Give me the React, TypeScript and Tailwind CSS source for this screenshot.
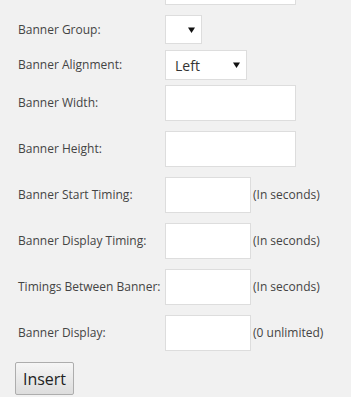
import type { ReactNode } from "react";

const font = { fontFamily: '"Open Sans", "Noto Sans", sans-serif' };

function Arrow() {
  return (
    <svg width="7" height="6" viewBox="0 0 7 6" className="shrink-0">
      <path d="M0 0.5h7L3.5 6z" fill="#111" />
    </svg>
  );
}

function Row({ label, gap, children }: { label: string; gap: string; children: ReactNode }) {
  return (
    <div className={`flex items-center ${gap}`}>
      <span className="w-[165px] shrink-0 whitespace-nowrap pl-[18px] text-[12px] text-[#444]">
        {label}
      </span>
      {children}
    </div>
  );
}

function Box({ wide }: { wide?: boolean }) {
  return (
    <div
      className={`h-[36px] border border-[#dddddd] bg-white ${wide ? "w-[131px]" : "w-[86px]"}`}
    />
  );
}

function Hint({ children }: { children: ReactNode }) {
  return <span className="pl-[2px] text-[12px] text-[#444]">{children}</span>;
}

export default function App() {
  return (
    <div className="h-[397px] w-[351px] overflow-hidden bg-[#f1f1f1]" style={font}>
      <div className="flex flex-col">
        <div className="mt-[-31px] flex">
          <div className="w-[165px] shrink-0" />
          <Box wide />
        </div>
        <Row label="Banner Group:" gap="mt-[10px]">
          <div className="flex h-[29px] w-[37px] items-center justify-end border border-[#dddddd] bg-white pr-[6px]">
            <Arrow />
          </div>
        </Row>
        <Row label="Banner Alignment:" gap="mt-[6px]">
          <div className="flex h-[30px] w-[82px] items-center justify-between border border-[#dddddd] bg-white pl-[9px] pr-[6px]">
            <span className="text-[14px] text-[#333]">Left</span>
            <Arrow />
          </div>
        </Row>
        <Row label="Banner Width:" gap="mt-[5px]">
          <Box wide />
        </Row>
        <Row label="Banner Height:" gap="mt-[10px]">
          <Box wide />
        </Row>
        <Row label="Banner Start Timing:" gap="mt-[10px]">
          <Box />
          <Hint>(In seconds)</Hint>
        </Row>
        <Row label="Banner Display Timing:" gap="mt-[10px]">
          <Box />
          <Hint>(In seconds)</Hint>
        </Row>
        <Row label="Timings Between Banner:" gap="mt-[10px]">
          <Box />
          <Hint>(In seconds)</Hint>
        </Row>
        <Row label="Banner Display:" gap="mt-[10px]">
          <Box />
          <Hint>(0 unlimited)</Hint>
        </Row>
        <div className="mt-[11px] pl-[15px]">
          <button className="flex h-[33px] w-[59px] items-center justify-center rounded-[2px] border border-[#adadad] bg-gradient-to-b from-[#f6f6f6] to-[#dddddd] text-[16px] text-[#222]">
            Insert
          </button>
        </div>
      </div>
    </div>
  );
}
